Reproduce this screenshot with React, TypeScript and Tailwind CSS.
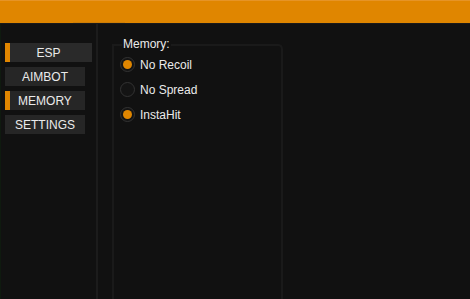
const tabs = [
  { name: "ESP", marked: true, wide: true },
  { name: "AIMBOT", marked: false, wide: false },
  { name: "MEMORY", marked: true, wide: false },
  { name: "SETTINGS", marked: false, wide: false },
]

const options = [
  { label: "No Recoil", on: true },
  { label: "No Spread", on: false },
  { label: "InstaHit", on: true },
]

function Radio({ on }: { on: boolean }) {
  return (
    <span className="flex h-[15px] w-[15px] items-center justify-center rounded-full border-[1.5px] border-[#333333] bg-[#141414]">
      {on && <span className="h-[9px] w-[9px] rounded-full bg-[#e08600]" />}
    </span>
  )
}

export default function App() {
  return (
    <div
      className="flex h-[299px] w-[470px] flex-col overflow-hidden bg-[#111111] text-[12px] text-[#ebebeb]"
      style={{ fontFamily: '"Liberation Sans", Arial, sans-serif' }}
    >
      <div className="relative h-[23px] shrink-0 border-t border-[#e69426] bg-[#e08600]">
        <div className="absolute bottom-0 left-[73px] h-[1px] w-[52px] bg-[#cf7e06]" />
      </div>
      <div className="h-px shrink-0 bg-[#1a1a1a]" />
      <div className="flex flex-1 border-l border-[#0f1a0f]">
        <div className="flex w-[97px] shrink-0 flex-col gap-[5px] border-r-2 border-[#1c1c1c] pl-[4px] pt-[19px]">
          {tabs.map((t) => (
            <div
              key={t.name}
              className={`flex h-[19px] items-center ${t.wide ? "w-[87px] bg-[#2a2a2a]" : "w-[80px] bg-[#262626]"}`}
            >
              <span className={`h-full w-[5px] shrink-0 ${t.marked ? "bg-[#e08600]" : ""}`} />
              <span className="flex-1 pr-[5px] text-center leading-none">{t.name}</span>
            </div>
          ))}
        </div>
        <div className="relative ml-[14px] mt-[20px] w-[171px] rounded-tr-[5px] border-l-2 border-r-2 border-t-2 border-[#1a1a1a]">
          <span className="absolute left-[8px] top-[-9px] bg-[#111111] px-[1px] leading-[14px]">Memory:</span>
          <div className="flex flex-col pl-[6px] pt-[6px]">
            {options.map((o) => (
              <div key={o.label} className="flex h-[25px] items-center gap-[5px]">
                <Radio on={o.on} />
                <span className="leading-none">{o.label}</span>
              </div>
            ))}
          </div>
        </div>
      </div>
    </div>
  )
}
